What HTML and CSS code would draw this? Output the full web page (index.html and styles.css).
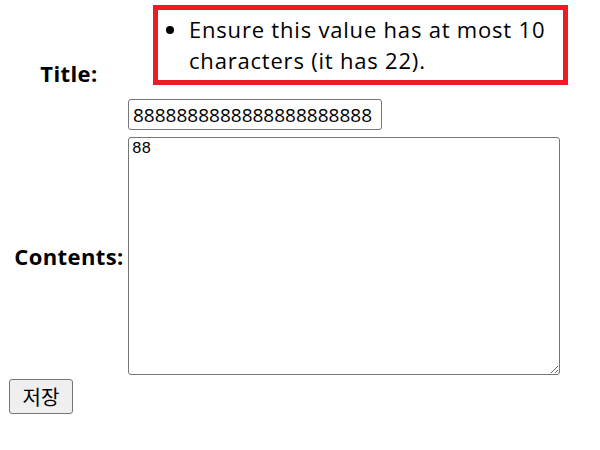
FILE: index.html
```html
<!DOCTYPE html>
<html lang="ko">
<head>
<meta charset="utf-8">
<title>Post</title>
<link rel="stylesheet" href="styles.css">
</head>
<body>
<form class="post-form">
  <table class="form-table">
    <tr class="row-title">
      <th class="label label-title"><label for="id_title">Title:</label></th>
      <td class="field">
        <ul class="errorlist">
          <li>Ensure this value has at most 10 characters (it has 22).</li>
        </ul>
        <input class="text-input" type="text" id="id_title" value="8888888888888888888888">
      </td>
    </tr>
    <tr class="row-contents">
      <th class="label"><label for="id_contents">Contents:</label></th>
      <td class="field">
        <textarea class="text-area" id="id_contents">88</textarea>
      </td>
    </tr>
  </table>
  <button class="save-btn" type="submit">저장</button>
</form>
</body>
</html>
```
FILE: styles.css
```css
html, body {
  background: #fff;
}
body {
  margin: 0 9px;
  font-family: "Open Sans", "Noto Sans CJK KR", sans-serif;
  font-size: 22px;
  letter-spacing: 0.8px;
  color: #000;
}
.form-table {
  border-collapse: collapse;
  border-spacing: 0;
}
.label {
  width: 112px;
  padding: 0 3px 0 4px;
  text-align: center;
  vertical-align: middle;
  font-weight: bold;
  letter-spacing: 0.4px;
  white-space: nowrap;
}
.label-title {
  padding-top: 8px;
}
.field {
  padding: 0;
  vertical-align: top;
}
.errorlist {
  margin: 5px 0 14px 25px;
  width: 374px;
  padding: 4px 0 4px 31px;
  border: 5px solid #ed1c24;
  line-height: 31px;
}
.text-input {
  display: block;
  box-sizing: border-box;
  width: 254px;
  height: 31px;
  margin: 0 0 7px;
  padding: 0 4px;
  border: 1px solid #767676;
  border-radius: 3px;
  font-family: "Open Sans", sans-serif;
  font-size: 19px;
  letter-spacing: 0;
}
.text-area {
  display: block;
  box-sizing: border-box;
  width: 432px;
  height: 238px;
  margin: 0;
  padding: 2px 3px;
  border: 1px solid #767676;
  border-radius: 3px;
  font-family: "Liberation Mono", monospace;
  font-size: 16px;
  letter-spacing: 0;
}
.save-btn {
  display: block;
  box-sizing: border-box;
  width: 64px;
  height: 35px;
  margin-top: 4px;
  padding: 0;
  border: 1px solid #767676;
  border-radius: 3px;
  background: #efefef;
  font-family: "Noto Sans CJK KR", sans-serif;
  font-size: 20px;
  letter-spacing: 0;
  color: #000;
}
```
